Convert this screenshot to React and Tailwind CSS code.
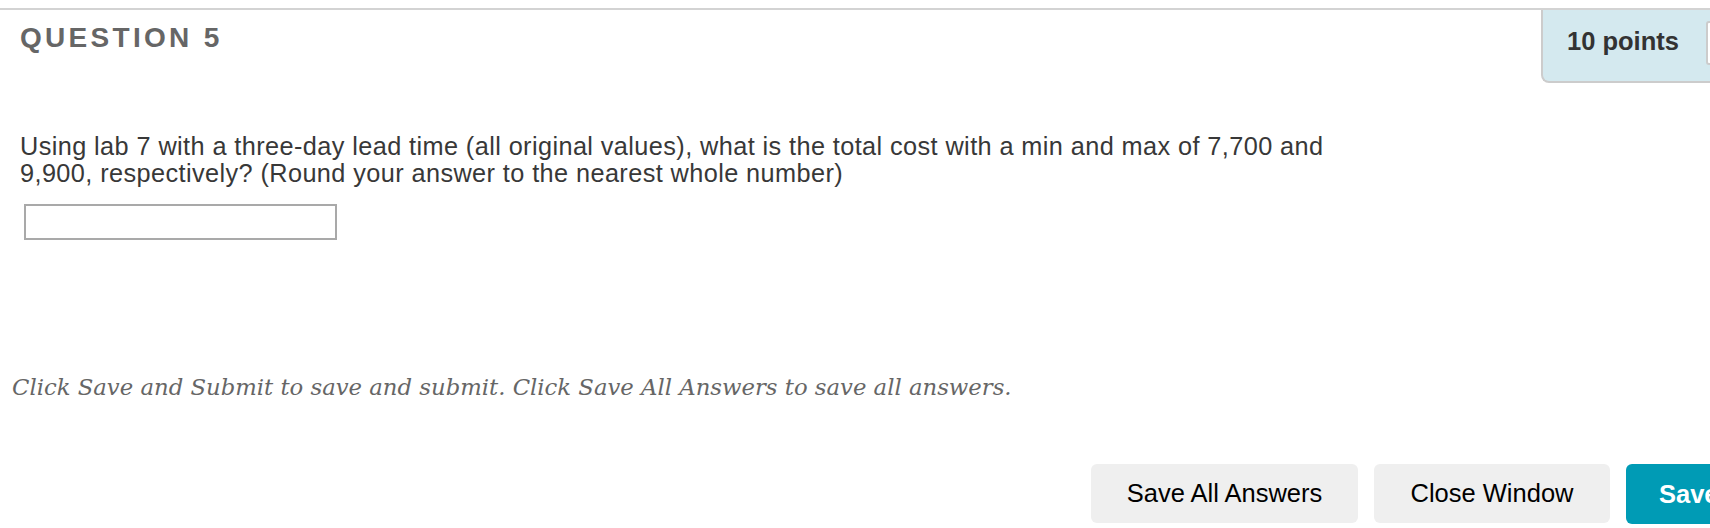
import React from 'react';

function PointsBox() {
  return (
    <div className="w-[169px] h-[73px] shrink-0 overflow-hidden bg-[#d4e9ef] border-l-2 border-b-2 border-[#cccccc] rounded-bl-[8px] flex items-start pt-[17px] pl-[24px] gap-[27px]">
      <span className="shrink-0 text-[25.5px] leading-[28px] font-bold text-[#333333]">10 points</span>
      <div className="shrink-0 w-[80px] h-[44px] -mt-[6px] border-2 border-[#cccccc] bg-white rounded-[3px]" />
    </div>
  );
}

function App() {
  return (
    <div className="w-[1710px] h-[528px] overflow-hidden bg-white font-['Liberation_Sans',Arial,sans-serif]">
      <div className="mt-[8px] border-t-2 border-[#d3d3d3]">
        {/* header */}
        <div className="flex justify-between">
          <h2 className="ml-[20px] mt-[14px] text-[28px] leading-[28px] font-bold tracking-[3.3px] text-[#666666]">
            QUESTION 5
          </h2>
          <PointsBox />
        </div>

        {/* question body */}
        <div className="px-[20px]">
          <p className="mt-[50px] text-[25.3px] leading-[27px] tracking-[0.4px] text-[#383838] max-w-[1340px]">
            Using lab 7 with a three-day lead time (all original values), what is the total cost with a min and max of 7,700 and 9,900, respectively? (Round your answer to the nearest whole number)
          </p>
          <input
            type="text"
            className="block mt-[17px] ml-[4px] w-[313px] h-[36px] border-2 border-[#a9a9a9] bg-white outline-none"
          />
        </div>

        {/* instructions */}
        <p className="mt-[134px] ml-[12px] font-['DejaVu_Serif',Georgia,serif] italic text-[22.75px] leading-[26px] text-[#666666]">
          Click Save and Submit to save and submit. Click Save All Answers to save all answers.
        </p>

        {/* buttons */}
        <div className="flex gap-[16px] pl-[1091px] mt-[64px]">
          <button className="shrink-0 w-[267px] h-[59px] rounded-[6px] bg-[#efefef] text-[25.5px] text-black">
            Save All Answers
          </button>
          <button className="shrink-0 w-[236px] h-[59px] rounded-[6px] bg-[#efefef] text-[25.5px] text-black">
            Close Window
          </button>
          <button className="shrink-0 w-[266px] h-[60px] rounded-[6px] bg-[#009bb5] text-[25.5px] font-bold text-white text-left pl-[33px]">
            Save and Submit
          </button>
        </div>
      </div>
    </div>
  );
}

export default App;
